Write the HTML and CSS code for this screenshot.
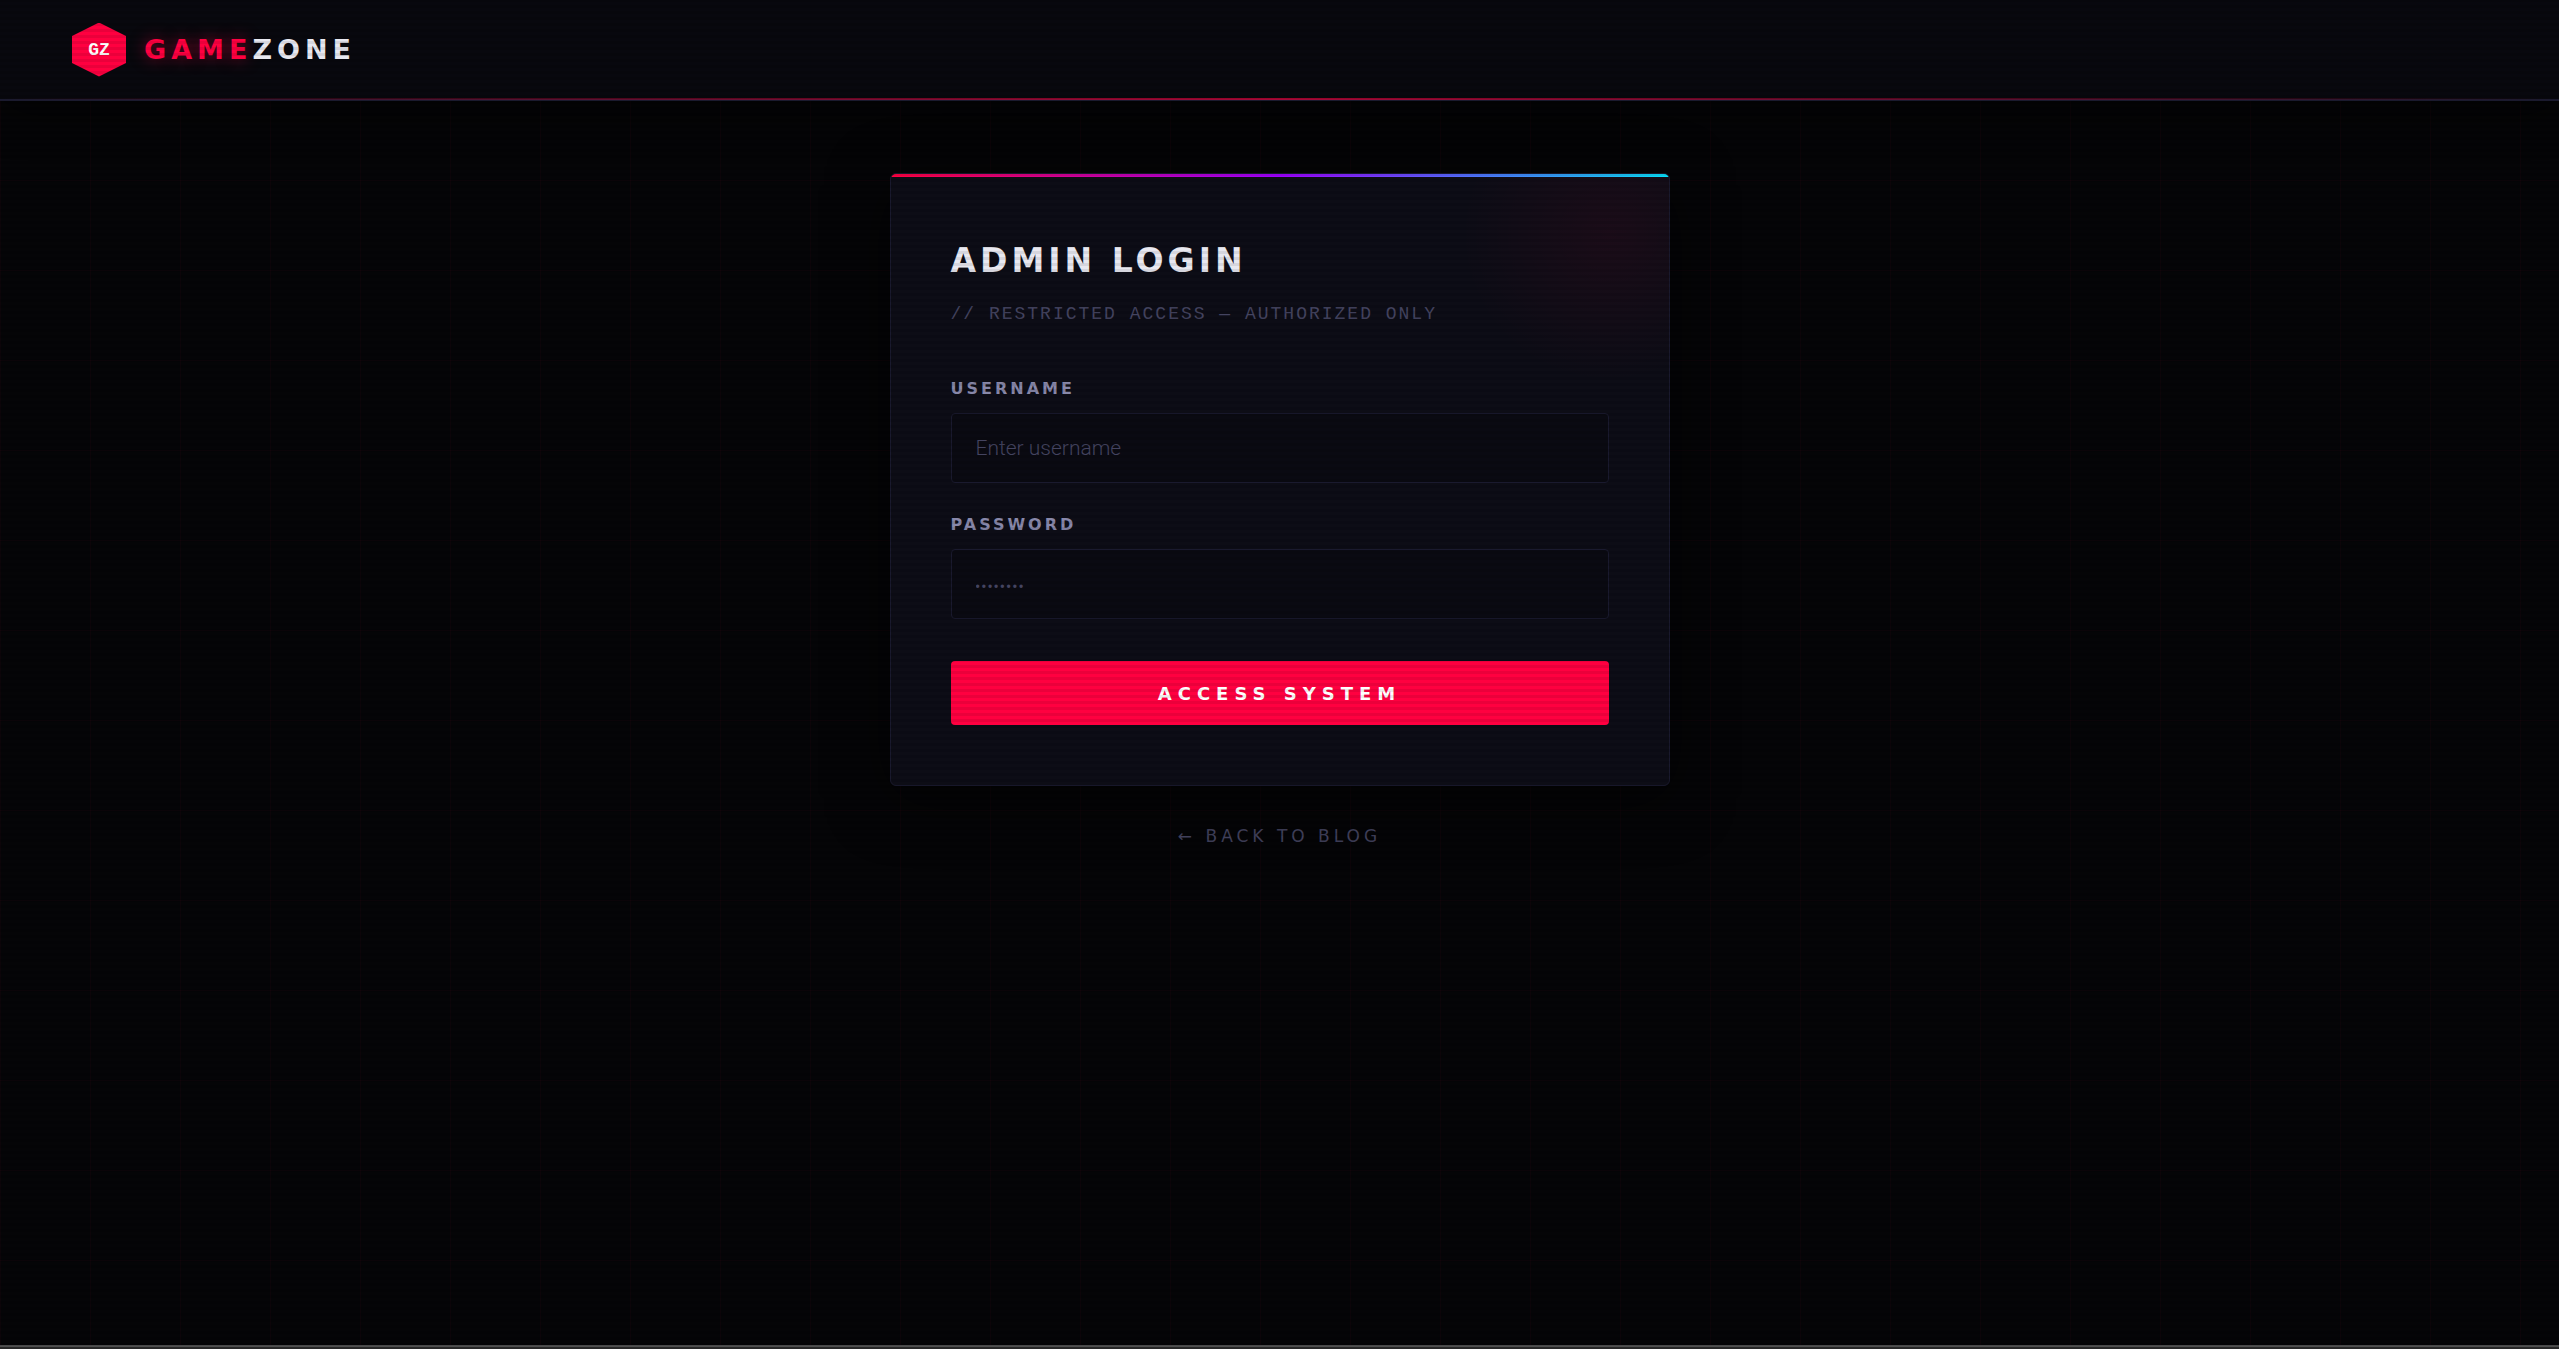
FILE: index.html
```
<!DOCTYPE html>
<html lang="en">

<head>
    <meta charset="utf-8" />
    <meta name="viewport" content="width=device-width, initial-scale=1" />

    <title>GameZone - Admin Login</title>

    <link rel="stylesheet" href="styles.css">
</head>

<body>
    <header class="header">
        <a href="/" class="logo">
            <span class="logo-icon">GZ</span>
            <span class="logo-text"><span class="logo-accent">GAME</span>ZONE</span>
        </a>
    </header>

    <main class="login">
        <section class="card">
            <h1>ADMIN LOGIN</h1>
            <p class="subtitle">// RESTRICTED ACCESS — AUTHORIZED ONLY</p>
            <form>
                <div class="field">
                    <label for="username">USERNAME</label>
                    <input type="text" id="username" name="username" placeholder="Enter username">
                </div>
                <div class="field">
                    <label for="password">PASSWORD</label>
                    <input type="password" id="password" name="password" placeholder="••••••••">
                </div>
                <button type="submit">ACCESS SYSTEM</button>
            </form>
        </section>
        <a href="/" class="back">← BACK TO BLOG</a>
    </main>

    <footer class="footer"></footer>
</body>

</html>
```
FILE: styles.css
```
:root {
    --red: #ff0040;
    --purple: #9d00ff;
    --cyan: #00e5ff;
    --bg: #050507;
    --panel: #0d0d16;
    --field: #0a0a12;
    --border: #1a1a2e;
    --text: #e8e8f0;
    --muted: #8888aa;
    --dim: #444460;
    --display: "DejaVu Sans", sans-serif;
}

* {
    box-sizing: border-box;
    margin: 0;
    padding: 0;
}

body {
    display: flex;
    flex-direction: column;
    min-height: 100vh;
    font-family: Roboto, sans-serif;
    color: var(--text);
    background-color: var(--bg);
    background-image:
        linear-gradient(rgba(255, 0, 64, 0.03) 1px, transparent 1px),
        linear-gradient(90deg, rgba(255, 0, 64, 0.03) 1px, transparent 1px);
    background-size: 90px 90px;
}

/* scanlines over everything */
body::after {
    content: "";
    position: fixed;
    inset: 0;
    background: repeating-linear-gradient(0deg, transparent 0 3px, rgba(0, 0, 0, 0.08) 3px 6px);
    pointer-events: none;
    z-index: 10;
}

a {
    text-decoration: none;
}

.header {
    position: relative;
    display: flex;
    align-items: center;
    height: 101px;
    padding: 0 72px;
    background: #08080e;
    border-bottom: 2px solid var(--border);
    box-shadow: 0 6px 45px rgba(0, 0, 0, 0.6);
}

.header::after {
    content: "";
    position: absolute;
    left: 0;
    right: 0;
    bottom: -1px;
    height: 2px;
    background: linear-gradient(90deg, transparent, var(--red), transparent);
    opacity: 0.6;
}

.logo {
    display: flex;
    align-items: center;
    gap: 18px;
    color: var(--text);
}

.logo-icon {
    display: grid;
    place-items: center;
    width: 54px;
    height: 54px;
    background: var(--red);
    clip-path: polygon(50% 0, 100% 25%, 100% 75%, 50% 100%, 0 75%, 0 25%);
    color: #fff;
    font: bold 18px "Liberation Mono", monospace;
}

.logo-text {
    font: bold 27px var(--display);
    letter-spacing: 5px;
}

.logo-accent {
    color: var(--red);
    text-shadow: 0 0 15px rgba(255, 0, 64, 0.5);
}

.login {
    flex: 1;
    display: flex;
    flex-direction: column;
    align-items: center;
    padding: 72px 24px;
}

.card {
    position: relative;
    width: 100%;
    max-width: 780px;
    padding: 60px;
    background: var(--panel);
    border: 1px solid var(--border);
    border-radius: 6px;
    box-shadow: 0 12px 60px rgba(0, 0, 0, 0.6);
    overflow: hidden;
}

.card::before {
    content: "";
    position: absolute;
    top: 0;
    left: 0;
    right: 0;
    height: 3px;
    background: linear-gradient(90deg, var(--red), var(--purple), var(--cyan));
}

.card::after {
    content: "";
    position: absolute;
    top: -90px;
    right: -90px;
    width: 300px;
    height: 300px;
    background: radial-gradient(circle, rgba(255, 0, 64, 0.06), transparent 70%);
    pointer-events: none;
}

h1 {
    margin-bottom: 11px;
    font: bold 33px/54px var(--display);
    letter-spacing: 4px;
}

.subtitle {
    margin-bottom: 48px;
    font: 18px/30px "Liberation Mono", monospace;
    letter-spacing: 2px;
    color: var(--dim);
}

.field {
    margin-bottom: 30px;
}

label {
    display: block;
    margin-bottom: 12px;
    font: bold 16px/24px var(--display);
    letter-spacing: 3px;
    color: var(--muted);
}

input {
    display: block;
    width: 100%;
    height: 70px;
    padding: 0 24px;
    background: var(--field);
    border: 1px solid var(--border);
    border-radius: 4px;
    color: var(--text);
    font: 300 21px Roboto, sans-serif;
}

input::placeholder {
    color: var(--dim);
}

input[type="password"]::placeholder {
    font: 12px "Liberation Sans", sans-serif;
    letter-spacing: 2px;
}

button {
    display: block;
    width: 100%;
    height: 64px;
    margin-top: 42px;
    background: var(--red);
    border: 0;
    border-radius: 4px;
    color: #fff;
    font: bold 18px var(--display);
    letter-spacing: 6px;
    cursor: pointer;
}

.back {
    margin-top: 36px;
    font: 17px/28px var(--display);
    letter-spacing: 4px;
    color: var(--dim);
}

.footer {
    height: 4px;
    background: #282828;
    border-top: 2px solid #505050;
}
```
